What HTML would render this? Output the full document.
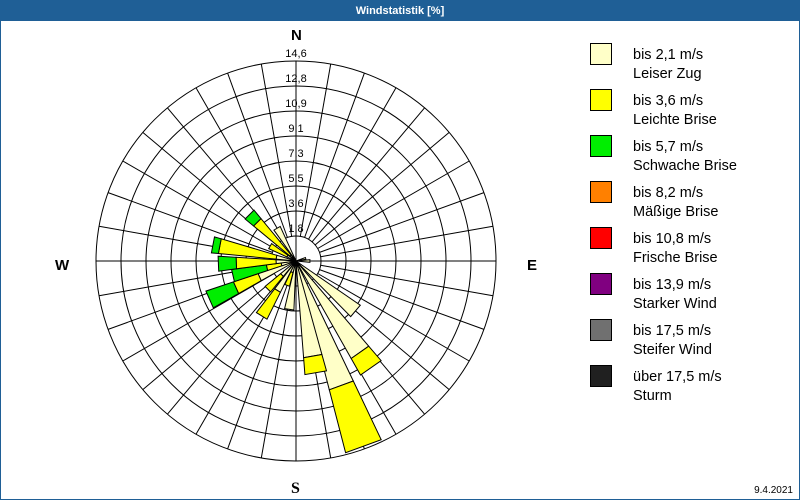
<!DOCTYPE html>
<html><head><meta charset="utf-8"><style>
body{margin:0;background:#fff;}
#w{position:relative;width:798px;height:498px;border:1px solid #1f5f96;overflow:hidden;background:#fff;font-family:"Liberation Sans",sans-serif;}
#t{height:20px;background:#1f5f96;color:#fff;font-weight:bold;font-size:11px;line-height:20px;text-align:center;}
.lg{position:absolute;left:589px;width:22px;height:22px;border:1px solid #000;box-sizing:border-box;}
.lt{position:absolute;left:632px;font-size:14.5px;line-height:19px;color:#000;}
.d{position:absolute;font-weight:bold;font-size:15px;}
</style></head><body><div id="w">
<div id="t">Windstatistik [%]</div>
<svg id="s" width="798" height="478" style="position:absolute;left:0;top:20px" xmlns="http://www.w3.org/2000/svg"></svg>
<div class="d" style="left:290px;top:26px">N</div>
<div class="d" style="left:526px;top:256px">E</div>
<div class="d" style="left:290px;top:479px;font-family:'Liberation Serif',serif;font-size:16px">S</div>
<div class="d" style="left:54px;top:256px">W</div>
<div style="position:absolute;right:6px;top:484px;font-size:10px">9.4.2021</div>

<div class="lg" style="top:42px;background:#ffffc8"></div><div class="lt" style="top:45px">bis 2,1 m/s<br>Leiser Zug</div>
<div class="lg" style="top:88px;background:#ffff00"></div><div class="lt" style="top:91px">bis 3,6 m/s<br>Leichte Brise</div>
<div class="lg" style="top:134px;background:#00ee00"></div><div class="lt" style="top:137px">bis 5,7 m/s<br>Schwache Brise</div>
<div class="lg" style="top:180px;background:#ff8000"></div><div class="lt" style="top:183px">bis 8,2 m/s<br>Mäßige Brise</div>
<div class="lg" style="top:226px;background:#ff0000"></div><div class="lt" style="top:229px">bis 10,8 m/s<br>Frische Brise</div>
<div class="lg" style="top:272px;background:#800080"></div><div class="lt" style="top:275px">bis 13,9 m/s<br>Starker Wind</div>
<div class="lg" style="top:318px;background:#707070"></div><div class="lt" style="top:321px">bis 17,5 m/s<br>Steifer Wind</div>
<div class="lg" style="top:364px;background:#202020"></div><div class="lt" style="top:367px">über 17,5 m/s<br>Sturm</div>
</div>
<script>
var s=document.getElementById('s'),cx=295,cy=240,h='';
function P(b,r){var a=b*Math.PI/180;return (cx+r*Math.sin(a)).toFixed(1)+','+(cy-r*Math.cos(a)).toFixed(1);}
for(var i=1;i<=8;i++)h+='<circle cx="'+cx+'" cy="'+cy+'" r="'+(i*25)+'" fill="none" stroke="#000" stroke-width="1"/>';
for(var b=0;b<360;b+=10)h+='<line x1="'+P(b,25).split(',')[0]+'" y1="'+P(b,25).split(',')[1]+'" x2="'+P(b,200).split(',')[0]+'" y2="'+P(b,200).split(',')[1]+'" stroke="#000" stroke-width="1"/>';
h+='<line x1="'+cx+'" y1="'+(cy-200)+'" x2="'+cx+'" y2="'+(cy+200)+'" stroke="#000"/><line x1="'+(cx-200)+'" y1="'+cy+'" x2="'+(cx+200)+'" y2="'+cy+'" stroke="#000"/>';
var C=['#ffffc8','#ffff00','#00ee00'];
var bars=[[160,[133,198]],[145,[112,131]],[170,[97,114]],[130,[78]],[188,[49]],[212,[35,65]],[200,[12,26]],[246,[40,66,95]],[257,[15,30,65]],[268,[20,60,78]],[281,[20,78,85]],[315,[8,55,66]],[330,[38]],[300,[10,30]],[90,[14]],[75,[10]],[225,[20,40]]];
bars.forEach(function(x){var b=x[0],seg=x[1],r0=0;seg.forEach(function(r,k){
h+='<polygon points="'+P(b-5.5,r0)+' '+P(b-5.5,r)+' '+P(b+5.5,r)+' '+P(b+5.5,r0)+'" fill="'+C[k]+'" stroke="#000" stroke-width="1"/>';r0=r;});});
var L=['1,8','3,6','5,5','7,3','9,1','10,9','12,8','14,6'];
for(var i=0;i<8;i++)h+='<text x="'+cx+'" y="'+(cy-(i+1)*25-4)+'" text-anchor="middle" font-family="Liberation Sans,sans-serif" font-size="11" fill="#000">'+L[i]+'</text>';
s.innerHTML=h;
</script>
</body></html>
